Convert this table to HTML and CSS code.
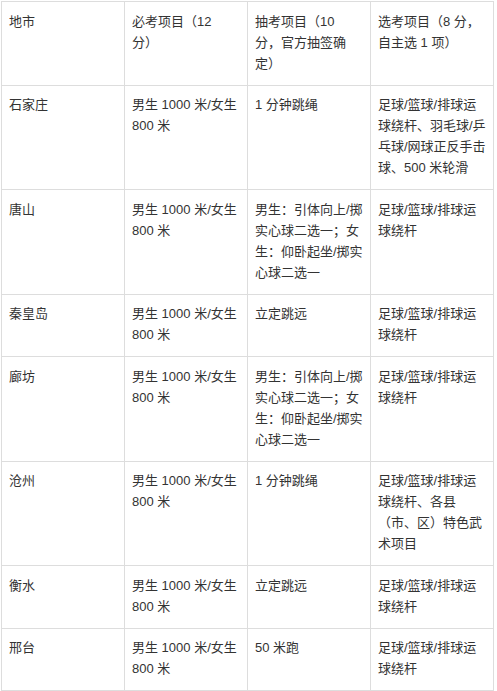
FILE: index.html
```html
<!DOCTYPE html>
<html lang="zh-CN">
<head>
<meta charset="utf-8">
<title>体育考试项目</title>
<link rel="stylesheet" href="styles.css">
</head>
<body>
<div class="page">
<table class="exam">
<colgroup><col class="c"><col class="c"><col class="c"><col class="c"></colgroup>
<tbody>
<tr><td>地市</td><td>必考项目（12 分）</td><td>抽考项目（10 分，官方抽签确定）</td><td>选考项目（8 分，自主选 1 项）</td></tr>
<tr><td>石家庄</td><td>男生 1000 米/女生 800 米</td><td>1 分钟跳绳</td><td>足球/篮球/排球运球绕杆、羽毛球/乒乓球/网球正反手击球、500 米轮滑</td></tr>
<tr><td>唐山</td><td>男生 1000 米/女生 800 米</td><td>男生：引体向上/掷实心球二选一；女生：仰卧起坐/掷实心球二选一</td><td>足球/篮球/排球运球绕杆</td></tr>
<tr><td>秦皇岛</td><td>男生 1000 米/女生 800 米</td><td>立定跳远</td><td>足球/篮球/排球运球绕杆</td></tr>
<tr><td>廊坊</td><td>男生 1000 米/女生 800 米</td><td>男生：引体向上/掷实心球二选一；女生：仰卧起坐/掷实心球二选一</td><td>足球/篮球/排球运球绕杆</td></tr>
<tr><td>沧州</td><td>男生 1000 米/女生 800 米</td><td>1 分钟跳绳</td><td>足球/篮球/排球运球绕杆、各县（市、区）特色武术项目</td></tr>
<tr><td>衡水</td><td>男生 1000 米/女生 800 米</td><td>立定跳远</td><td>足球/篮球/排球运球绕杆</td></tr>
<tr><td>邢台</td><td>男生 1000 米/女生 800 米</td><td>50 米跑</td><td>足球/篮球/排球运球绕杆</td></tr>
</tbody>
</table>
</div>
</body>
</html>
```
FILE: styles.css
```css
html, body {
  margin: 0;
  padding: 0;
  background: #ffffff;
}
.page {
  padding: 1px 0 0 1px;
}
.exam {
  border-collapse: separate;
  border-spacing: 0;
  table-layout: fixed;
  width: 493px;
  border-top: 1px solid #dddddd;
  border-left: 1px solid #dddddd;
  font-family: "Liberation Sans", "Noto Sans CJK SC", sans-serif;
  font-size: 13px;
  line-height: 21px;
  color: #333333;
}
.exam .c {
  width: 123px;
}
.exam td {
  box-sizing: border-box;
  vertical-align: top;
  padding: 8.5px 7px 11px 7px;
  border-right: 1px solid #dddddd;
  border-bottom: 1px solid #dddddd;
  word-break: normal;
  text-spacing-trim: space-all;
}
```
